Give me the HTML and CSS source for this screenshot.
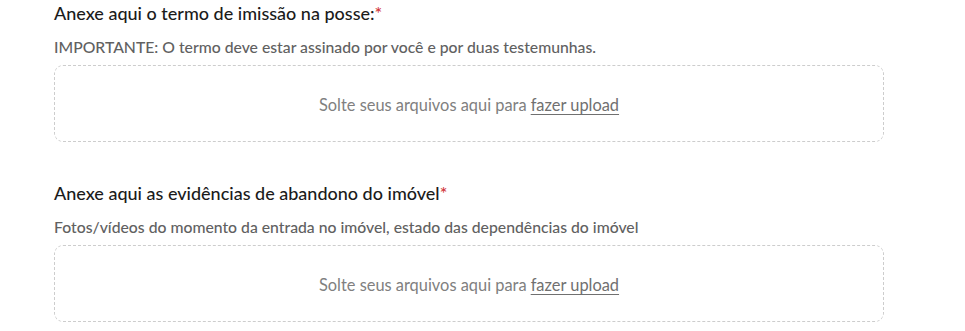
FILE: index.html
```html
<!DOCTYPE html>
<html lang="pt">
<head>
<meta charset="utf-8">
<link rel="stylesheet" href="styles.css">
</head>
<body>
<main class="form">
  <section class="field">
    <h2 class="field-title">Anexe aqui o termo de imissão na posse:<span class="req">*</span></h2>
    <p class="field-desc">IMPORTANTE: O termo deve estar assinado por você e por duas testemunhas.</p>
    <div class="dropzone">Solte seus arquivos aqui para <span class="link">fazer upload</span></div>
  </section>
  <section class="field">
    <h2 class="field-title">Anexe aqui as evidências de abandono do imóvel<span class="req">*</span></h2>
    <p class="field-desc">Fotos/vídeos do momento da entrada no imóvel, estado das dependências do imóvel</p>
    <div class="dropzone">Solte seus arquivos aqui para <span class="link">fazer upload</span></div>
  </section>
</main>
</body>
</html>
```
FILE: styles.css
```css
html, body {
  margin: 0;
  padding: 0;
  background: #fff;
}
body {
  font-family: Lato, "Open Sans", sans-serif;
  color: #1b1b1b;
}
.form {
  width: 830px;
  padding: 0 0 0 54px;
  display: flex;
  flex-direction: column;
  gap: 38px;
}
.field {
  display: flex;
  flex-direction: column;
}
.field-title {
  margin: 1px 0 0;
  font-size: 18px;
  font-weight: 500;
  line-height: 24px;
  color: #1b1b1b;
}
.req {
  color: #d13438;
}
.field-desc {
  margin: 12px 0 8px;
  font-size: 15.75px;
  font-weight: 500;
  line-height: 20px;
  color: #616161;
}
.dropzone {
  box-sizing: border-box;
  height: 77px;
  padding-top: 2px;
  border: 1px dashed #cdcdcd;
  border-radius: 9px;
  display: flex;
  align-items: center;
  justify-content: center;
  font-size: 16.4px;
  color: #808080;
}
.link {
  margin-left: 0.25em;
  color: #707070;
  text-decoration: underline;
  text-decoration-color: #707070;
  text-underline-offset: 3px;
}
```
